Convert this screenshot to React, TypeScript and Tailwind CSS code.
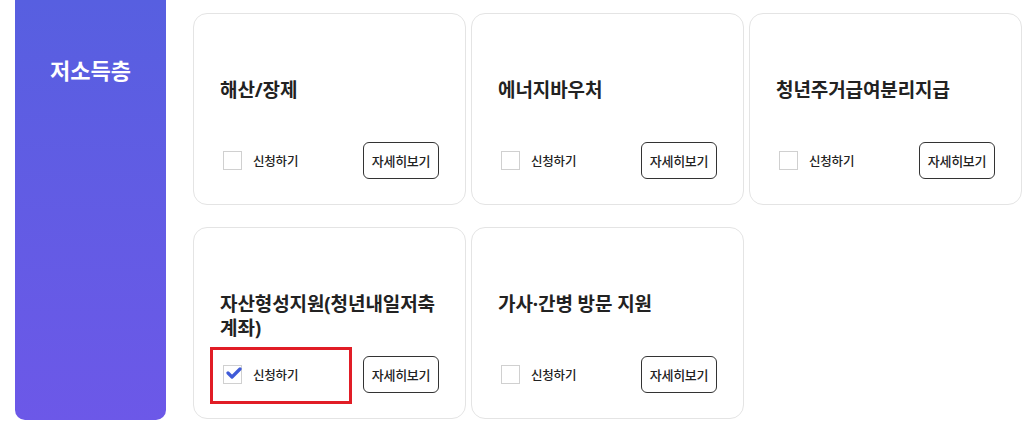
import React from "react";

type Item = { title: string; checked?: boolean };

const items: Item[] = [
  { title: "해산/장제" },
  { title: "에너지바우처" },
  { title: "청년주거급여분리지급" },
  { title: "자산형성지원(청년내일저축계좌)", checked: true },
  { title: "가사·간병 방문 지원" },
];

const font = { fontFamily: '"Noto Sans", "Noto Sans CJK KR", sans-serif' };
const cjk = { fontFamily: '"Noto Sans CJK KR", sans-serif' };

function Card({ item }: { item: Item }) {
  return (
    <div className="relative w-[273px] h-[192px] rounded-[14px] border border-[#e4e4e4] bg-white pl-[26px] pr-[26px] pt-[64px] flex flex-col">
      <div className="h-[48px] text-[19px] leading-[24px] font-bold text-[#222] tracking-[-0.1px]" style={{ wordBreak: "break-all" }}>
        {item.title}
      </div>
      <div className="mt-[16px] h-[37px] flex items-center justify-between">
        <label className="flex items-center ml-[3px] gap-[11px]">
          <span className="relative w-[19px] h-[19px] border border-[#d0d0d0] bg-white">
            {item.checked && (
              <svg className="absolute left-[2px] top-[1px]" width="16" height="13" viewBox="0 0 16 13">
                <path d="M2 6 L6 10 L14 2" fill="none" stroke="#3f5bd8" strokeWidth="3.2" strokeLinecap="round" strokeLinejoin="round" />
              </svg>
            )}
          </span>
          <span className="text-[12.5px] leading-[19px] font-medium text-[#222] tracking-[-0.2px]" style={cjk}>신청하기</span>
        </label>
        <button className="w-[76px] h-[37px] rounded-[6px] border border-[#333] bg-white text-[13px] font-medium text-[#222] tracking-[-0.3px]" style={cjk}>
          자세히보기
        </button>
      </div>
      {item.checked && (
        <div className="absolute left-[16px] top-[119px] w-[142px] h-[57px] border-[3px] border-[#e11d26]" />
      )}
    </div>
  );
}

export default function App() {
  return (
    <div className="w-[1034px] h-[427px] bg-white overflow-hidden flex" style={font}>
      <div className="ml-[15px] w-[151px] h-[420px] rounded-b-[10px] bg-linear-to-b from-[#575fe0] to-[#6c58e8] pt-[55px] text-center">
        <div className="text-white text-[22px] leading-[30px] font-bold">저소득층</div>
      </div>
      <div className="ml-[27px] mt-[13px] grid grid-cols-[273px_273px_273px] gap-x-[5px] gap-y-[22px] content-start">
        {items.map((it) => (
          <Card key={it.title} item={it} />
        ))}
      </div>
    </div>
  );
}
